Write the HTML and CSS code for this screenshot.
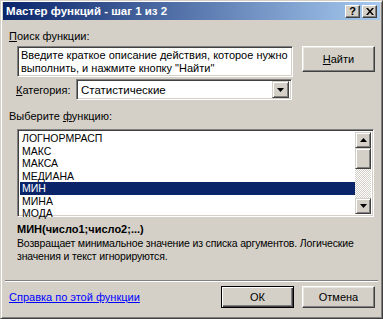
FILE: index.html
```html
<!DOCTYPE html>
<html lang="ru">
<head>
  <meta charset="UTF-8" />
  <title>Мастер функций - шаг 1 из 2</title>
  <link rel="stylesheet" href="styles.css">
</head>
<body>
  <div class="window">
    <div class="titlebar">
      <span class="title">Мастер функций - шаг 1 из 2</span>
      <div class="caption-buttons">
        <span class="cap-btn">?</span>
        <span class="cap-btn close">
          <svg width="8" height="7" viewBox="0 0 8 7"><path d="M0 0h2l2 2.5L6 0h2L5 3.5 8 7H6L4 4.5 2 7H0l3-3.5z" fill="#000"/></svg>
        </span>
      </div>
    </div>

    <div class="content">
      <div class="label"><u>П</u>оиск функции:</div>
      <div class="search-row">
        <div class="field search-box">Введите краткое описание действия, которое нужно выполнить, и нажмите кнопку "Найти"</div>
        <button class="btn find"><u>Н</u>айти</button>
      </div>

      <div class="category-row">
        <span class="cat-label"><u>К</u>атегория:</span>
        <div class="field select">
          <span class="select-value">Статистические</span>
          <span class="arrow-btn"><svg width="7" height="4" viewBox="0 0 7 4"><path d="M0 0h7L3.5 4z" fill="#000"/></svg></span>
        </div>
      </div>

      <div class="label pick">Выберите <u>ф</u>ункцию:</div>
      <div class="field listbox">
        <ul class="items">
          <li>ЛОГНОРМРАСП</li>
          <li>МАКС</li>
          <li>МАКСА</li>
          <li>МЕДИАНА</li>
          <li class="selected">МИН</li>
          <li>МИНА</li>
          <li>МОДА</li>
        </ul>
        <div class="scrollbar">
          <span class="sb-btn"><svg width="7" height="4" viewBox="0 0 7 4"><path d="M3.5 0L7 4H0z" fill="#000"/></svg></span>
          <span class="sb-thumb"></span>
          <span class="sb-track"></span>
          <span class="sb-btn"><svg width="7" height="4" viewBox="0 0 7 4"><path d="M0 0h7L3.5 4z" fill="#000"/></svg></span>
        </div>
      </div>

      <div class="signature">МИН(число1;число2;...)</div>
      <p class="description">Возвращает минимальное значение из списка аргументов. Логические значения и текст игнорируются.</p>
    </div>

    <div class="separator"></div>

    <div class="footer">
      <a href="#" class="help">Справка по этой функции</a>
      <div class="buttons">
        <button class="btn default">ОК</button>
        <button class="btn">Отмена</button>
      </div>
    </div>
  </div>
</body>
</html>
```

FILE: styles.css
```css
* {
  box-sizing: border-box;
}

body {
  margin: 0;
  font-family: "Liberation Sans", Arial, sans-serif;
  font-size: 11px;
  color: #000;
  background: #d4d0c8;
}

.window {
  width: 383px;
  height: 319px;
  background: #d4d0c8;
  border: 1px solid;
  border-color: #d4d0c8 #404040 #404040 #d4d0c8;
  box-shadow: inset 1px 1px #fff, inset -1px -1px #808080;
  padding: 1px 3px 3px 3px;
  display: flex;
  flex-direction: column;
}

.titlebar {
  height: 18px;
  margin-left: -1px;
  margin-right: -1px;
  background: linear-gradient(to right, #0a246a, #a6caf0);
  display: flex;
  align-items: center;
  justify-content: space-between;
  padding: 0 3px 0 3px;
}

.title {
  color: #fff;
  font-weight: bold;
  font-size: 11.5px;
}

.caption-buttons {
  display: flex;
  gap: 2px;
}

.cap-btn {
  width: 15px;
  height: 13px;
  background: #d4d0c8;
  border: 1px solid;
  border-color: #fff #404040 #404040 #fff;
  box-shadow: inset -1px -1px #808080;
  font-weight: bold;
  font-size: 11px;
  line-height: 11px;
  display: flex;
  align-items: center;
  justify-content: center;
}

.content {
  padding: 0 0 0 5px;
}

.label {
  margin-top: 10px;
  height: 13px;
  line-height: 13px;
}

.field {
  background: #fff;
  border: 1px solid;
  border-color: #808080 #fff #fff #808080;
  box-shadow: inset 1px 1px #404040, inset -1px -1px #d4d0c8;
}

.search-row {
  display: flex;
  align-items: flex-start;
  margin-top: 3px;
  padding-left: 8px;
}

.search-box {
  width: 276px;
  height: 31px;
  padding: 2px 3px;
  line-height: 12.5px;
  font-size: 11px;
}

.btn {
  font-family: "Liberation Sans", Arial, sans-serif;
  font-size: 11px;
  color: #000;
  background: #d4d0c8;
  border: 1px solid;
  border-color: #fff #404040 #404040 #fff;
  box-shadow: inset -1px -1px #808080, inset 1px 1px #e8e6e1;
  padding: 0;
  border-radius: 0;
}

.find {
  width: 73px;
  height: 26px;
  margin-left: 9px;
}

.category-row {
  display: flex;
  align-items: center;
  margin-top: 2px;
  padding-left: 7px;
}

.cat-label {
  width: 60px;
}

.select {
  width: 216px;
  height: 21px;
  display: flex;
  align-items: center;
  justify-content: space-between;
  padding: 2px;
}

.select-value {
  padding-left: 2px;
  font-size: 11.5px;
}

.arrow-btn {
  width: 17px;
  height: 17px;
  background: #d4d0c8;
  border: 1px solid;
  border-color: #d4d0c8 #404040 #404040 #d4d0c8;
  box-shadow: inset 1px 1px #fff, inset -1px -1px #808080;
  display: flex;
  align-items: center;
  justify-content: center;
}

.pick {
  margin-top: 10px;
}

.listbox {
  margin-top: 6px;
  margin-left: 8px;
  width: 357px;
  height: 88px;
  padding: 2px;
  display: flex;
}

.items {
  list-style: none;
  margin: 0;
  padding: 0;
  flex: 1;
}

.items li {
  height: 12.5px;
  line-height: 12.5px;
  padding-left: 2px;
  font-size: 10.5px;
}

.items .selected {
  background: #0a246a;
  color: #fff;
}

.scrollbar {
  width: 16px;
  display: flex;
  flex-direction: column;
  background-color: #f0eeea;
  background-image: repeating-conic-gradient(#fff 0 25%, #d4d0c8 0 50%);
  background-size: 2px 2px;
}

.sb-btn,
.sb-thumb {
  background: #d4d0c8;
  border: 1px solid;
  border-color: #d4d0c8 #404040 #404040 #d4d0c8;
  box-shadow: inset 1px 1px #fff, inset -1px -1px #808080;
  display: flex;
  align-items: center;
  justify-content: center;
}

.sb-btn {
  height: 16px;
}

.sb-thumb {
  height: 21px;
}

.sb-track {
  flex: 1;
}

.signature {
  margin-top: 5px;
  padding-left: 8px;
  font-weight: bold;
  height: 14px;
  line-height: 14px;
}

.description {
  margin: 1px 0 0 8px;
  line-height: 13px;
  font-size: 10.5px;
  letter-spacing: -0.15px;
  width: 360px;
}

.separator {
  margin: auto 1px 0 1px;
  height: 2px;
  border-top: 1px solid #808080;
  border-bottom: 1px solid #fff;
}

.footer {
  display: flex;
  align-items: center;
  justify-content: space-between;
  padding: 4px 4px 7px 5px;
}

.help {
  color: #0000ff;
  text-decoration: underline;
}

.buttons {
  display: flex;
  gap: 8px;
}

.buttons .btn {
  width: 73px;
  height: 22px;
}

.btn.default {
  border: 1px solid #000;
  box-shadow: inset 1px 1px #fff, inset -1px -1px #404040, inset -2px -2px #808080;
}
```
